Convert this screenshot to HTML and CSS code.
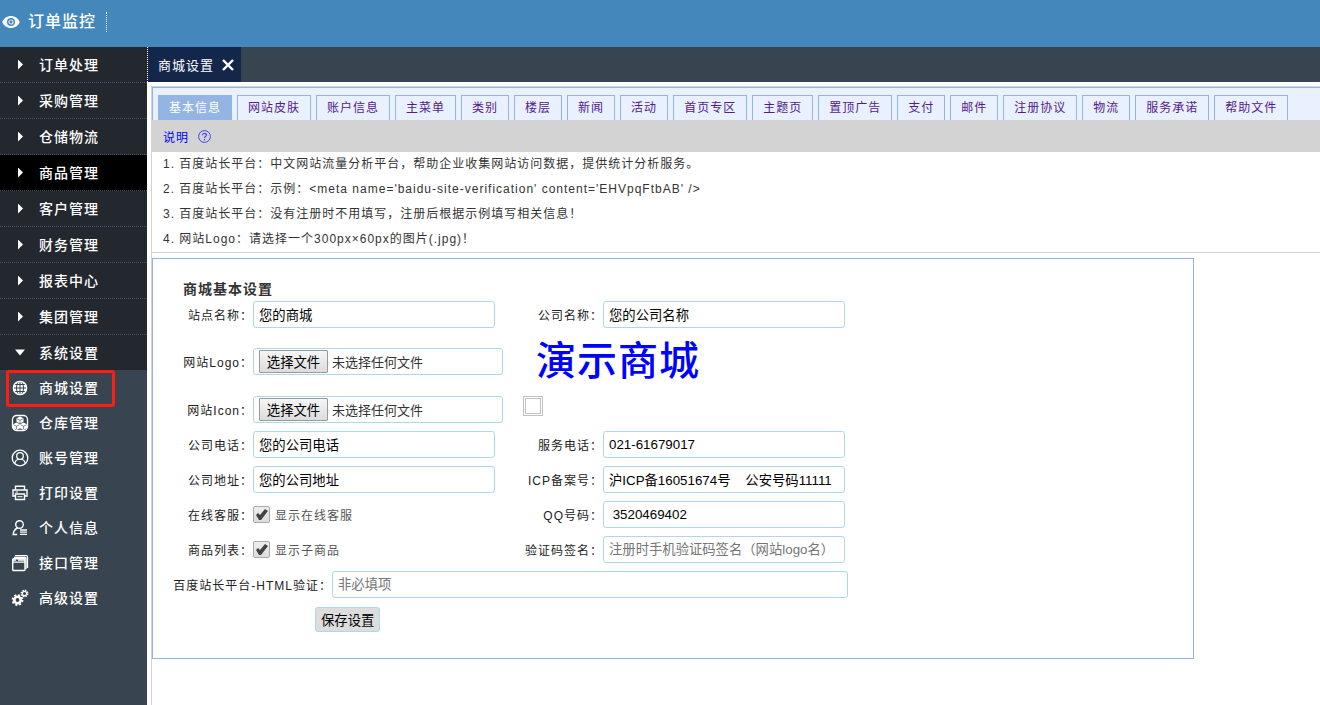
FILE: index.html
```html
<!DOCTYPE html>
<html lang="zh-CN">
<head>
<meta charset="utf-8">
<title>商城设置</title>
<link rel="stylesheet" href="styles.css">
</head>
<body>
<header class="topbar">
  <a class="topbar-link" href="#monitor">
    <svg class="eye" viewBox="0 0 18 12" width="18" height="12" aria-hidden="true"><path fill="#fff" fill-rule="evenodd" d="M9 0C5 0 1.800 2.300.2 6 1.800 9.700 5 12 9 12s7.200-2.300 8.800-6C16.200 2.300 13 0 9 0zm0 2a4 4 0 1 1 0 8 4 4 0 0 1 0-8z"/><circle cx="9" cy="6" r="2" fill="none" stroke="#fff" stroke-opacity=".8" stroke-width="1.200"/></svg>
    <span class="topbar-text">订单监控</span>
  </a>
</header>
<div class="shell">
  <nav class="sidebar">
    <a class="menu" href="#orders"><i class="caret"></i>订单处理</a>
    <a class="menu" href="#purchase"><i class="caret"></i>采购管理</a>
    <a class="menu" href="#storage"><i class="caret"></i>仓储物流</a>
    <a class="menu menu-hover" href="#goods"><i class="caret"></i>商品管理</a>
    <a class="menu" href="#customers"><i class="caret"></i>客户管理</a>
    <a class="menu" href="#finance"><i class="caret"></i>财务管理</a>
    <a class="menu" href="#reports"><i class="caret"></i>报表中心</a>
    <a class="menu" href="#group"><i class="caret"></i>集团管理</a>
    <a class="menu menu-open" href="#system"><i class="caret caret-down"></i>系统设置</a>
    <a class="sub sub-marked" href="#shop"><svg viewBox="0 0 18 18" aria-hidden="true"><circle cx="9" cy="9" r="7" fill="#fff"/><g fill="none" stroke="#38444f"><path d="M9 2v14M2 9h14M3.500 5.500h11M3.500 12.500h11"/><ellipse cx="9" cy="9" rx="3.500" ry="7"/></g><circle cx="9" cy="9" r="6.700" fill="none" stroke="#fff" stroke-width="1.200"/></svg>商城设置</a>
    <a class="sub" href="#warehouse"><svg viewBox="0 0 18 18" aria-hidden="true"><rect x="1.500" y="1.500" width="15" height="15" rx="4" fill="none" stroke="#fff" stroke-width="1.300"/><path fill="#fff" d="M9 2.500l3.500 1.700v3.600L9 9.500 5.500 7.800V4.200zM5.500 8.500L9 10.200v4L5.500 16 2 14.200v-4zM12.500 8.500l3.500 1.700v4L12.500 16 9 14.200v-4z"/><path d="M6 4.800l3 1.500 3-1.500M9 6.300v3M2.500 10.700l3 1.500 3-1.500M5.500 12.200v3M9.500 10.700l3 1.500 3-1.500M12.500 12.200v3" fill="none" stroke="#38444f" stroke-width=".6"/></svg>仓库管理</a>
    <a class="sub" href="#accounts"><svg viewBox="0 0 18 18" aria-hidden="true"><g fill="none" stroke="#fff" stroke-width="1.300"><circle cx="9" cy="9" r="7.800"/><circle cx="9" cy="7" r="3.300"/><path d="M3.500 14.500c.6-2.600 2-3.800 3.800-4.500M14.500 14.500c-.6-2.600-2-3.800-3.800-4.500"/></g></svg>账号管理</a>
    <a class="sub" href="#print"><svg viewBox="0 0 18 18" aria-hidden="true"><g fill="none" stroke="#fff" stroke-width="1.400"><path d="M4.500 6V2.200h9V6M4.500 12H2V6h14v6h-2.500"/><path d="M4.500 10h9v5.500h-9z"/><path d="M4.500 8h2.500M6.500 12.700h5" stroke-width="1"/></g></svg>打印设置</a>
    <a class="sub" href="#profile"><svg viewBox="0 0 18 18" aria-hidden="true"><g fill="none" stroke="#fff" stroke-width="1.400"><circle cx="8.500" cy="5.500" r="3.800"/><path d="M6.500 9C4 10 2.500 12 2.200 15.500h4"/><path d="M9 11h7M9 13.200h7M9 15.400h7" stroke-width="1.300"/></g></svg>个人信息</a>
    <a class="sub" href="#api"><svg viewBox="0 0 18 18" aria-hidden="true"><path d="M4 1.700h11.500q1 0 1 1V14" fill="none" stroke="#fff" stroke-width="1.300"/><path d="M3 3.500h11q1 0 1 1V15" fill="none" stroke="#fff" stroke-width="1.300"/><rect x="1.700" y="4.700" width="12.300" height="11.800" rx="1" fill="none" stroke="#fff" stroke-width="1.400"/><path d="M2 6h3M7 6h7M2 8.200h12" stroke="#fff" stroke-width="1.300"/></svg>接口管理</a>
    <a class="sub" href="#advanced"><svg viewBox="0 0 18 18" aria-hidden="true"><g fill="none" stroke="#fff"><circle cx="6.500" cy="11" r="3.200" stroke-width="2.600"/><circle cx="6.500" cy="11" r="4.900" stroke-width="2" stroke-dasharray="2 1.850"/><circle cx="13.500" cy="4.500" r="2.200" stroke-width="1.300"/><circle cx="13.500" cy="4.500" r="3.200" stroke-width="1.500" stroke-dasharray="1.400 1.110"/></g></svg>高级设置</a>
  </nav>
  <main class="main">
    <div class="windows">
      <div class="window-tab">商城设置
        <button class="close" type="button" aria-label="关闭"><svg viewBox="0 0 12 12" width="12" height="12" aria-hidden="true"><path d="M1 1l10 10M11 1L1 11" stroke="#fff" stroke-width="2.400"/></svg></button>
      </div>
    </div>
    <div class="page">
      <nav class="tabs">
        <a class="tab tab-on" href="#t1">基本信息</a>
        <a class="tab" href="#t2">网站皮肤</a>
        <a class="tab" href="#t3">账户信息</a>
        <a class="tab" href="#t4">主菜单</a>
        <a class="tab" href="#t5">类别</a>
        <a class="tab" href="#t6">楼层</a>
        <a class="tab" href="#t7">新闻</a>
        <a class="tab" href="#t8">活动</a>
        <a class="tab" href="#t9">首页专区</a>
        <a class="tab" href="#t10">主题页</a>
        <a class="tab" href="#t11">置顶广告</a>
        <a class="tab" href="#t12">支付</a>
        <a class="tab" href="#t13">邮件</a>
        <a class="tab" href="#t14">注册协议</a>
        <a class="tab" href="#t15">物流</a>
        <a class="tab" href="#t16">服务承诺</a>
        <a class="tab" href="#t17">帮助文件</a>
      </nav>
      <a class="help-head" href="#help">说明
        <svg viewBox="0 0 13 13" width="13" height="13" aria-hidden="true"><g fill="none" stroke="#33f"><circle cx="6.500" cy="6.500" r="5.900" stroke-width=".9"/><path d="M4.600 5.200c0-2.500 3.800-2.500 3.800-.1 0 1.300-1.900 1.400-1.900 3M6.500 9v1.200" stroke-width="1.100"/></g></svg>
      </a>
      <div class="help">
        <p>1. 百度站长平台：中文网站流量分析平台，帮助企业收集网站访问数据，提供统计分析服务。</p>
        <p>2. 百度站长平台：示例：&lt;meta name='baidu-site-verification' content='EHVpqFtbAB' /&gt;</p>
        <p>3. 百度站长平台：没有注册时不用填写，注册后根据示例填写相关信息！</p>
        <p>4. 网站Logo：请选择一个300px×60px的图片(.jpg)！</p>
      </div>
      <form class="panel">
        <h1 class="title">商城基本设置</h1>
        <div class="row">
          <label class="label" for="site">站点名称：</label><input class="field" id="site" type="text" value="您的商城">
          <label class="label label-2" for="company">公司名称：</label><input class="field" id="company" type="text" value="您的公司名称">
        </div>
        <div class="row row-logo">
          <label class="label" for="logo">网站Logo：</label>
          <div class="file"><button class="pick" id="logo" type="button">选择文件</button><span class="file-name">未选择任何文件</span></div>
          <span class="logo">演示商城</span>
        </div>
        <div class="row">
          <label class="label" for="icon">网站Icon：</label>
          <div class="file"><button class="pick" id="icon" type="button">选择文件</button><span class="file-name">未选择任何文件</span></div>
          <span class="icon-preview"></span>
        </div>
        <div class="row">
          <label class="label" for="tel">公司电话：</label><input class="field" id="tel" type="text" value="您的公司电话">
          <label class="label label-2" for="service">服务电话：</label><input class="field" id="service" type="text" value="021-61679017">
        </div>
        <div class="row">
          <label class="label" for="addr">公司地址：</label><input class="field" id="addr" type="text" value="您的公司地址">
          <label class="label label-2" for="icp">ICP备案号：</label><input class="field" id="icp" type="text" value="沪ICP备16051674号 &nbsp;&nbsp; 公安号码11111">
        </div>
        <div class="row">
          <span class="label">在线客服：</span>
          <label class="check"><input class="box" type="checkbox" checked>显示在线客服</label>
          <label class="label label-2" for="qq">QQ号码：</label><input class="field" id="qq" type="text" value=" 3520469402">
        </div>
        <div class="row">
          <span class="label">商品列表：</span>
          <label class="check"><input class="box" type="checkbox" checked>显示子商品</label>
          <label class="label label-2" for="sign">验证码签名：</label><input class="field" id="sign" type="text" placeholder="注册时手机验证码签名（网站logo名）">
        </div>
        <div class="row">
          <label class="label label-wide" for="verify">百度站长平台-HTML验证：</label><input class="field field-wide" id="verify" type="text" placeholder="非必填项">
        </div>
        <div class="row row-save"><button class="save" type="submit">保存设置</button></div>
      </form>
    </div>
  </main>
</div>
</body>
</html>
```
FILE: styles.css
```css
*, *::before, *::after { box-sizing: border-box; }

body {
  margin: 0;
  min-height: 100vh;
  display: flex;
  flex-direction: column;
  font-family: "Liberation Sans", "Noto Sans CJK SC", sans-serif;
  font-size: 12px;
  letter-spacing: 1px;
  color: #333;
  background: #fff;
}

a { text-decoration: none; }

input, button { font-family: inherit; }

.topbar {
  height: 47px;
  padding-top: 12px;
  background: #4487bb;
}

.topbar-link {
  display: inline-flex;
  align-items: center;
  height: 20px;
  padding: 0 10px 0 2px;
  gap: 8px;
  border-right: 1px dotted #fff;
  font-size: 16px;
  font-weight: 500;
  line-height: 20px;
  color: #fff;
}

.shell { flex: 1; display: flex; }

.sidebar {
  flex: none;
  width: 147px;
  background: #38444f;
}

.menu, .sub {
  position: relative;
  display: flex;
  align-items: center;
  padding: 0 0 2px 11px;
  gap: 10px;
  font-size: 14px;
  font-weight: 500;
  color: #fff;
}

.menu {
  height: 36px;
  background: #23272e;
  border-bottom: 1px dotted #4c535f;
}

.menu-hover { background: #000; }
.menu-open { height: 35px; border-bottom: 0; }
.sub { height: 35px; }
.sub svg { width: 18px; height: 18px; margin-top: 2px; }

.sub-marked::after {
  content: "";
  position: absolute;
  left: 6px;
  top: 0;
  width: 109px;
  height: 37px;
  border: 3px solid #ff1c10;
  border-radius: 3px;
}

.caret {
  width: 18px;
  height: 10px;
  margin-top: 2px;
  background: #fff;
  clip-path: polygon(7px 0, 12px 5px, 7px 10px);
}

.caret-down { clip-path: polygon(4px 2px, 14px 2px, 9px 8px); }

.main {
  flex: 1;
  min-width: 0;
  display: flex;
  flex-direction: column;
}

.windows {
  display: flex;
  height: 35px;
  background: #38444f;
}

.window-tab {
  display: flex;
  align-items: center;
  gap: 8px;
  padding: 0 7px 0 10px;
  border-left: 1px dotted #fff;
  background: #14274b;
  font-size: 13px;
  color: #fff;
}

.close {
  display: flex;
  padding: 0;
  border: 0;
  background: none;
}

.page {
  flex: 1;
  margin: 4px 0 0 4px;
  border-left: 1px solid #d3d3d3;
  border-top: 1px solid #d3d3d3;
}

.tabs {
  display: flex;
  gap: 5px;
  height: 33px;
  padding: 7px 0 0 5px;
  border: solid #94b5e3;
  border-width: 1px 0 0 1px;
  background: #e9f1ff;
}

.tab {
  padding: 0 10px;
  border: 1px solid #94b5e3;
  border-bottom: 0;
  line-height: 24px;
  white-space: nowrap;
  color: #551a8b;
}

.tab-on { background: #94b5e3; color: #fff; }

.help-head {
  display: flex;
  align-items: center;
  gap: 9px;
  height: 32px;
  padding-left: 11px;
  background: #d3d3d3;
  color: #00f;
}

.help {
  padding-left: 11px;
  margin-bottom: 5px;
  border-bottom: 1px solid #d3d3d3;
}

.help p { margin: 0; line-height: 25px; }

.panel {
  max-width: 1042px;
  padding: 22px 0 21px;
  border: 1px solid #94b5e3;
}

.title {
  margin: 0;
  padding-left: 30px;
  font-size: 14px;
  line-height: 16px;
}

.row {
  display: flex;
  align-items: center;
  height: 35px;
}

.row-logo { height: 60px; padding-bottom: 2px; }

.label {
  flex: none;
  width: 100px;
  text-align: right;
  white-space: nowrap;
  color: #222;
}

.label-2 { width: 108px; }
.label-wide { width: 179px; }

.field, .file {
  width: 242px;
  height: 27px;
  padding: 0 5px;
  border: 1px solid #add8e6;
  border-radius: 3px;
  background: #fff;
  color: #000;
}

.field::placeholder { color: #757575; }
.field-wide { width: 516px; }

.file {
  display: flex;
  align-items: center;
  gap: 4px;
  width: 250px;
  color: #333;
}

.pick {
  width: 69px;
  height: 23px;
  padding: 0;
  border: 1px solid #999;
  border-radius: 1px;
  background: linear-gradient(#f6f6f6, #dcdcdc);
  color: #000;
}

.file-name {
  font-size: 13px;
  letter-spacing: normal;
}

.logo {
  margin-left: 33px;
  font-size: 40px;
  font-weight: 500;
  line-height: 58px;
  color: #00f;
}

.icon-preview {
  width: 20px;
  height: 20px;
  margin: 0 0 7px 20px;
  border: 3px double #c0c0c0;
}

.check {
  display: flex;
  align-items: center;
  gap: 5px;
  width: 242px;
  color: #555;
}

.box {
  appearance: none;
  width: 17px;
  height: 17px;
  margin: 0;
  border: 1px solid #aaa;
  border-radius: 2px;
  background: linear-gradient(#eee, #ddd);
}

.box:checked::before {
  content: "";
  display: block;
  width: 15px;
  height: 15px;
  background: #444;
  clip-path: polygon(2px 8px, 4px 6px, 6px 8px, 11px 2px, 14px 4px, 7px 13px, 5px 13px);
}

.row-save { padding-left: 162px; }

.save {
  height: 25px;
  padding: 0 5px;
  border: 1px solid #add8e6;
  border-radius: 3px;
  background: #ddd;
  color: #000;
}
```
